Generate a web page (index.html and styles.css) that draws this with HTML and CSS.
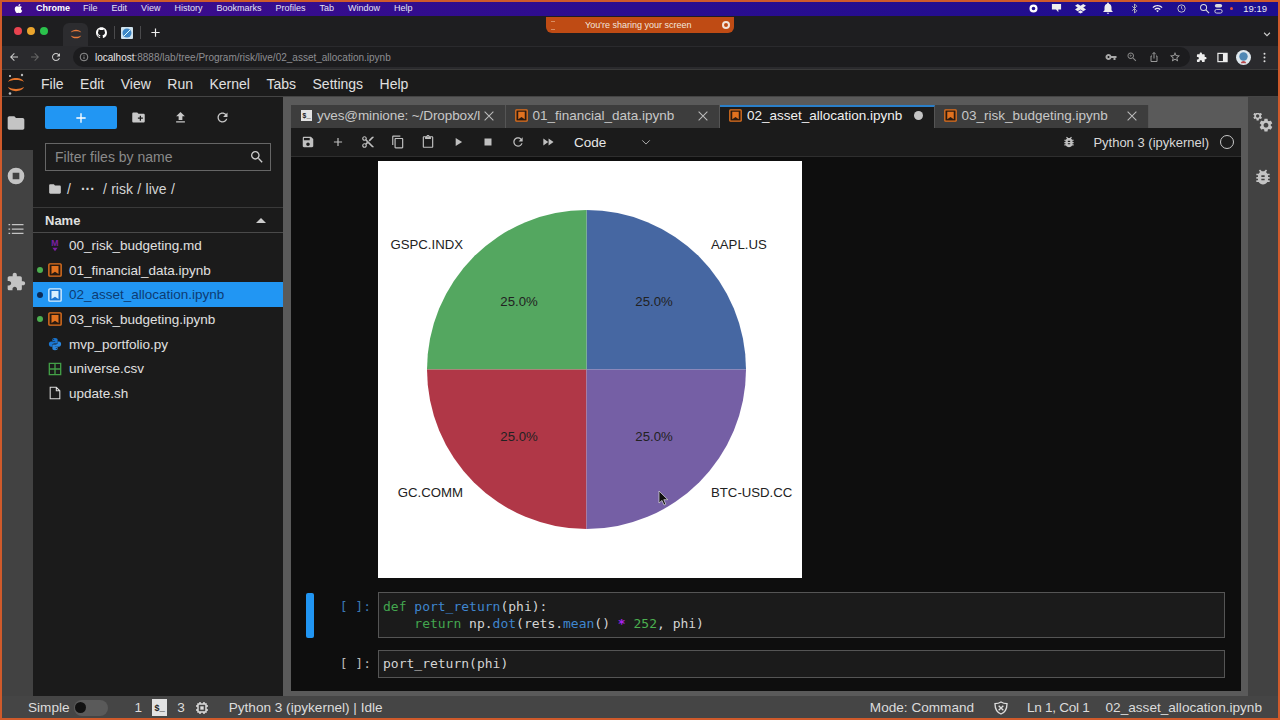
FILE: index.html
```html
<!DOCTYPE html>
<html lang="en">
 <head>
  <meta charset="UTF-8" />
  <meta name="viewport" content="width=device-width, initial-scale=1.0" />
  <title>02_asset_allocation.ipynb - JupyterLab</title>
  <link rel="stylesheet" href="styles.css">
 </head>
 <body>
  <!-- shared icons -->
  <svg class="defs" width="0" height="0">
   <symbol id="i-nb" viewBox="0 0 16 16"><rect x="1" y="1" width="14" height="14" rx="1" fill="#2a1a10" stroke="#e2721f" stroke-width="1.6"/><path d="M4 3.5h8v9l-4-2.6-4 2.6z" fill="#e2721f"/></symbol>
   <symbol id="i-nb-sel" viewBox="0 0 16 16"><rect x="1" y="1" width="14" height="14" rx="1" fill="#1976d2" stroke="#d8f0ff" stroke-width="1.6"/><path d="M4 3.5h8v9l-4-2.6-4 2.6z" fill="#d8f0ff"/></symbol>
   <symbol id="i-close" viewBox="0 0 16 16"><path d="M3 3l10 10M13 3L3 13" stroke="currentColor" stroke-width="1.2" fill="none"/></symbol>
   <symbol id="i-folder" viewBox="0 0 24 24"><path fill="currentColor" d="M10 4H4c-1.1 0-2 .9-2 2v12c0 1.1.9 2 2 2h16c1.1 0 2-.9 2-2V8c0-1.1-.9-2-2-2h-8l-2-2z"/></symbol>
   <symbol id="i-refresh" viewBox="0 0 24 24"><path fill="currentColor" d="M17.65 6.35C16.2 4.9 14.21 4 12 4c-4.42 0-7.99 3.58-7.99 8s3.57 8 7.99 8c3.73 0 6.84-2.55 7.73-6h-2.08c-.82 2.33-3.04 4-5.65 4-3.31 0-6-2.69-6-6s2.69-6 6-6c1.66 0 3.14.69 4.22 1.78L13 11h7V4l-2.35 2.35z"/></symbol>
   <symbol id="i-bug" viewBox="0 0 24 24"><path fill="currentColor" d="M20 8h-2.81c-.45-.78-1.07-1.45-1.82-1.96L17 4.41 15.59 3l-2.17 2.17C12.96 5.06 12.49 5 12 5c-.49 0-.96.06-1.41.17L8.41 3 7 4.41l1.62 1.63C7.88 6.55 7.26 7.22 6.81 8H4v2h2.09c-.05.33-.09.66-.09 1v1H4v2h2v1c0 .34.04.67.09 1H4v2h2.81c1.04 1.79 2.97 3 5.19 3s4.15-1.21 5.19-3H20v-2h-2.09c.05-.33.09-.66.09-1v-1h2v-2h-2v-1c0-.34-.04-.67-.09-1H20V8zm-6 8h-4v-2h4v2zm0-4h-4v-2h4v2z"/></symbol>
   <symbol id="i-puzzle" viewBox="0 0 24 24"><path fill="currentColor" d="M20.5 11H19V7c0-1.1-.9-2-2-2h-4V3.5C13 2.12 11.88 1 10.5 1S8 2.12 8 3.5V5H4c-1.1 0-1.99.9-1.99 2v3.8H3.5c1.49 0 2.7 1.21 2.7 2.7s-1.21 2.7-2.7 2.7H2V20c0 1.1.9 2 2 2h3.8v-1.5c0-1.49 1.21-2.7 2.7-2.7 1.49 0 2.7 1.21 2.7 2.7V22H17c1.1 0 2-.9 2-2v-4h1.5c1.38 0 2.5-1.12 2.5-2.5S21.88 11 20.5 11z"/></symbol>
   <symbol id="i-gear" viewBox="0 0 24 24"><path fill="currentColor" d="M19.14 12.94c.04-.3.06-.61.06-.94 0-.32-.02-.64-.07-.94l2.03-1.58c.18-.14.23-.41.12-.61l-1.92-3.32c-.12-.22-.37-.29-.59-.22l-2.39.96c-.5-.38-1.03-.7-1.62-.94l-.36-2.54c-.04-.24-.24-.41-.48-.41h-3.84c-.24 0-.43.17-.47.41l-.36 2.54c-.59.24-1.13.57-1.62.94l-2.39-.96c-.22-.08-.47 0-.59.22L2.74 8.87c-.12.21-.08.47.12.61l2.03 1.58c-.05.3-.09.63-.09.94s.02.64.07.94l-2.03 1.58c-.18.14-.23.41-.12.61l1.92 3.32c.12.22.37.29.59.22l2.39-.96c.5.38 1.03.7 1.62.94l.36 2.54c.05.24.24.41.48.41h3.84c.24 0 .44-.17.47-.41l.36-2.54c.59-.24 1.13-.56 1.62-.94l2.39.96c.22.08.47 0 .59-.22l1.92-3.32c.12-.22.07-.47-.12-.61l-2.01-1.58zM12 15.6c-1.98 0-3.6-1.62-3.6-3.6s1.62-3.6 3.6-3.6 3.6 1.62 3.6 3.6-1.62 3.6-3.6 3.6z"/></symbol>
  </svg>

  <div class="screen">
   <!-- mac menu bar -->
   <div class="macbar">
    <svg class="apple" viewBox="0 0 24 24"><path fill="currentColor" d="M18.7 19.5c-.8 1.2-1.7 2.4-3 2.5-1.3 0-1.8-.8-3.3-.8s-2 .8-3.3.8c-1.3 0-2.3-1.3-3.2-2.5C4.2 17 2.9 12.5 4.7 9.4c.9-1.5 2.4-2.5 4.1-2.5 1.3 0 2.5.9 3.3.9s2.3-1.1 3.8-.9c.7 0 2.5.3 3.6 2-.1.1-2.2 1.3-2.1 3.8 0 3 2.6 4 2.7 4-.1.1-.5 1.4-1.4 2.8zM13 3.5c.7-.8 1.9-1.5 2.9-1.5.1 1.2-.3 2.3-1 3.2-.7.8-1.8 1.5-2.9 1.4-.1-1.2.4-2.4 1-3.1z"/></svg>
    <b>Chrome</b><span>File</span><span>Edit</span><span>View</span><span>History</span><span>Bookmarks</span><span>Profiles</span><span>Tab</span><span>Window</span><span>Help</span>
    <div class="tray">
     <svg viewBox="0 0 12 12"><circle cx="6" cy="6" r="3.2" fill="none" stroke="#fff" stroke-width="2.4"/></svg>
     <svg viewBox="0 0 12 12"><path fill="#eee" d="M1 1h10v6H8v3L5.500 7H1z"/></svg>
     <svg viewBox="0 0 12 12"><path fill="#eee" d="M3 1l3 2 3-2 3 2-3 2 3 2-3 2-3-2-3 2-3-2 3-2-3-2zM3 9.800l3-1.800 3 1.800L6 11.500z"/></svg>
     <svg class="wide" viewBox="0 0 24 24"><path fill="#eee" d="M12 22c1.100 0 2-.9 2-2h-4c0 1.100.89 2 2 2zm6-6v-5c0-3.070-1.640-5.640-4.500-6.320V4c0-.83-.67-1.500-1.500-1.500s-1.500.67-1.500 1.500v.68C7.630 5.360 6 7.920 6 11v5l-2 2v1h16v-1l-2-2z"/></svg>
     <svg viewBox="0 0 12 12"><path fill="none" stroke="#bbb" d="M3.500 3.500l5 5L6 11V1l2.500 2.500-5 5"/></svg>
     <svg viewBox="0 0 24 24"><path fill="#eee" d="M1 9l2 2c4.970-4.970 13.030-4.970 18 0l2-2C16.930 2.930 7.080 2.930 1 9zm8 8l3 3 3-3c-1.650-1.660-4.340-1.660-6 0zm-4-4l2 2c2.760-2.760 7.240-2.760 10 0l2-2C15.140 9.140 8.870 9.140 5 13z"/></svg>
     <svg viewBox="0 0 12 12"><circle cx="6" cy="6" r="4" fill="none" stroke="#ccc"/><path d="M6 3.500V6l1.500 1" fill="none" stroke="#ccc" stroke-width=".8"/></svg>
     <svg viewBox="0 0 12 12"><circle cx="5" cy="5" r="3.300" fill="none" stroke="#ddd" stroke-width="1.100"/><path d="M7.500 7.500L11 11" stroke="#ddd" stroke-width="1.200"/></svg>
     <svg class="ctrl" viewBox="0 0 12 12"><rect x="2" y="1" width="8" height="4" rx="2" fill="#ddd"/><rect x="2" y="7" width="8" height="4" rx="2" fill="none" stroke="#ddd"/></svg>
     <i class="rec"></i>
     <span class="clock">19:19</span>
    </div>
   </div>

   <!-- chrome tabs -->
   <div class="tabstrip">
    <div class="lights"><i class="red"></i><i class="yellow"></i><i class="green"></i></div>
    <div class="pinned">
     <svg viewBox="0 0 20 20"><path fill="#e87a3a" d="M2.500 8C5 2.500 15 2.500 17.500 8 14 5.500 6 5.500 2.500 8zM2.500 12C5 17.500 15 17.500 17.500 12 14 14.500 6 14.500 2.500 12z"/></svg>
    </div>
    <svg class="gh" viewBox="0 0 24 24"><path fill="#fff" d="M12 .5C5.370.5 0 5.870 0 12.500c0 5.300 3.440 9.800 8.200 11.390.6.11.82-.26.82-.58v-2.030c-3.340.73-4.040-1.610-4.040-1.610-.55-1.390-1.330-1.760-1.330-1.760-1.090-.74.08-.73.08-.73 1.200.09 1.840 1.240 1.840 1.240 1.070 1.830 2.810 1.300 3.490 1 .11-.78.42-1.300.76-1.600-2.670-.3-5.470-1.330-5.470-5.930 0-1.310.47-2.380 1.240-3.220-.14-.3-.54-1.520.1-3.180 0 0 1.010-.32 3.300 1.230a11.500 11.500 0 0 1 6 0c2.280-1.550 3.290-1.230 3.290-1.230.64 1.660.24 2.880.12 3.180a4.650 4.650 0 0 1 1.230 3.220c0 4.610-2.800 5.630-5.480 5.920.42.36.81 1.100.81 2.220v3.290c0 .32.22.7.83.58A12 12 0 0 0 24 12.500C24 5.870 18.630.5 12 .5z"/></svg>
    <i class="tab-sep"></i>
    <svg class="fav" viewBox="0 0 12 12"><rect width="12" height="12" rx="1" fill="#cfe2ee"/><circle cx="6" cy="6" r="4.500" fill="#3d86c6"/><path d="M3 9l6-6" stroke="#dff" stroke-width="1"/></svg>
    <i class="tab-sep"></i>
    <svg class="newtab" viewBox="0 0 12 12"><path d="M6 1.500v9M1.500 6h9" stroke="#eee" stroke-width="1.300"/></svg>
    <svg class="tabs-menu" viewBox="0 0 12 12"><path d="M2.500 4.500L6 8l3.500-3.500" fill="none" stroke="#ccc" stroke-width="1.300"/></svg>
   </div>

   <!-- screen sharing pill -->
   <div class="share">
    <span class="grip"></span>
    <span class="share-text">You're sharing your screen</span>
    <span class="share-stop"></span>
   </div>

   <!-- chrome address bar -->
   <div class="urlbar">
    <svg class="nav" viewBox="0 0 24 24"><path fill="#ccc" d="M20 11H7.830l5.590-5.590L12 4l-8 8 8 8 1.410-1.410L7.830 13H20z"/></svg>
    <svg class="nav" viewBox="0 0 24 24"><path fill="#666" d="M12 4l-1.410 1.410L16.170 11H4v2h12.170l-5.580 5.590L12 20l8-8z"/></svg>
    <svg class="nav reload" viewBox="0 0 24 24"><use href="#i-refresh"/></svg>
    <div class="omnibox">
     <svg class="info" viewBox="0 0 12 12"><circle cx="6" cy="6" r="4.600" fill="none" stroke="#aaa"/><path d="M6 5.500v3M6 3.400v1" stroke="#aaa"/></svg>
     <span class="url"><b>localhost</b>:8888/lab/tree/Program/risk/live/02_asset_allocation.ipynb</span>
     <div class="omni-icons">
      <svg viewBox="0 0 24 24"><path fill="#aaa" d="M12.650 10C11.830 7.670 9.610 6 7 6c-3.310 0-6 2.690-6 6s2.690 6 6 6c2.610 0 4.830-1.670 5.650-4H17v4h4v-4h2v-4H12.650zM7 14c-1.100 0-2-.9-2-2s.9-2 2-2 2 .9 2 2-.9 2-2 2z"/></svg>
      <svg viewBox="0 0 24 24"><path fill="#888" d="M15.500 14h-.79l-.28-.27C15.410 12.590 16 11.110 16 9.500 16 5.910 13.090 3 9.500 3S3 5.910 3 9.500 5.910 16 9.500 16c1.610 0 3.090-.59 4.230-1.570l.27.28v.79l5 4.990L20.490 19l-4.990-5zm-6 0C7.010 14 5 11.990 5 9.500S7.010 5 9.500 5 14 7.010 14 9.500 11.990 14 9.500 14zM9 7h1v2h2v1h-2v2H9v-2H7V9h2z"/></svg>
      <svg viewBox="0 0 24 24"><path fill="none" stroke="#999" stroke-width="2" d="M8 10H6v11h12V10h-2M12 15V3M8.500 6.500L12 3l3.500 3.500"/></svg>
      <svg viewBox="0 0 24 24"><path fill="#aaa" d="M22 9.240l-7.190-.62L12 2 9.190 8.630 2 9.240l5.460 4.730L5.820 21 12 17.270 18.180 21l-1.630-7.030L22 9.240zM12 15.400l-3.760 2.270 1-4.280-3.320-2.880 4.380-.38L12 6.100l1.710 4.040 4.380.38-3.320 2.880 1 4.280L12 15.400z"/></svg>
     </div>
    </div>
    <div class="chrome-actions">
     <svg viewBox="0 0 24 24"><use href="#i-puzzle"/></svg>
     <svg viewBox="0 0 12 12"><rect x="1" y="1.500" width="10" height="9" fill="none" stroke="#eee" stroke-width="1.300"/><rect x="6.500" y="1.500" width="4.500" height="9" fill="#eee"/></svg>
     <svg class="avatar" viewBox="0 0 16 16"><circle cx="8" cy="8" r="8" fill="#dfe8ee"/><circle cx="8" cy="7" r="4.500" fill="#4f88b5"/><path d="M5 14c1-3 5-3 6 0z" fill="#b7484b"/></svg>
     <svg viewBox="0 0 12 12"><circle cx="6" cy="2" r="1.100" fill="#ddd"/><circle cx="6" cy="6" r="1.100" fill="#ddd"/><circle cx="6" cy="10" r="1.100" fill="#ddd"/></svg>
    </div>
   </div>

   <!-- jupyter menu -->
   <div class="menubar">
    <svg class="logo" viewBox="0 0 16 24">
     <path fill="#e8762c" d="M0 10C2 4.500 14 4.500 16 10 12 7.400 4 7.400 0 10zM0 15C2 20.500 14 20.500 16 15 12 17.600 4 17.600 0 15z"/>
     <circle cx="14" cy="3" r="1.200" fill="#bbb"/><circle cx="2" cy="4" r="1" fill="#ddd"/><circle cx="2" cy="21.500" r="1.300" fill="#bbb"/>
    </svg>
    <span>File</span><span>Edit</span><span>View</span><span>Run</span><span>Kernel</span><span>Tabs</span><span>Settings</span><span>Help</span>
   </div>

   <div class="lab">
    <!-- left activity bar -->
    <div class="activity">
     <div class="act-item active"><svg viewBox="0 0 24 24"><use href="#i-folder"/></svg></div>
     <div class="act-item"><svg viewBox="0 0 24 24"><path fill="currentColor" d="M12 2a10 10 0 1 0 0 20 10 10 0 0 0 0-20zm4 14H8V8h8z"/></svg></div>
     <div class="act-item"><svg viewBox="0 0 24 24"><path fill="currentColor" d="M3 6h2v1.500H3zM7 6h14v1.500H7zM3 11.250h2v1.500H3zM7 11.250h14v1.500H7zM3 16.500h2V18H3zM7 16.500h14V18H7z"/></svg></div>
     <div class="act-item"><svg viewBox="0 0 24 24"><use href="#i-puzzle"/></svg></div>
    </div>

    <!-- file browser -->
    <div class="sidebar">
     <div class="fb-tools">
      <div class="launcher"><svg viewBox="0 0 24 24"><path fill="#fff" d="M19 13h-6v6h-2v-6H5v-2h6V5h2v6h6v2z"/></svg></div>
      <svg class="fb-ico" viewBox="0 0 24 24"><path fill="currentColor" d="M20 6h-8l-2-2H4c-1.110 0-1.990.89-1.990 2L2 18c0 1.110.89 2 2 2h16c1.110 0 2-.89 2-2V8c0-1.110-.89-2-2-2zm-1 8h-3v3h-2v-3h-3v-2h3V9h2v3h3v2z"/></svg>
      <svg class="fb-ico" viewBox="0 0 24 24"><path fill="currentColor" d="M9 16h6v-6h4l-7-7-7 7h4zm-4 2h14v2H5z"/></svg>
      <svg class="fb-ico" viewBox="0 0 24 24"><use href="#i-refresh"/></svg>
     </div>
     <div class="filter">
      <span>Filter files by name</span>
      <svg viewBox="0 0 24 24"><path fill="#ccc" d="M15.500 14h-.79l-.28-.27C15.410 12.590 16 11.110 16 9.500 16 5.910 13.090 3 9.500 3S3 5.910 3 9.500 5.910 16 9.500 16c1.610 0 3.090-.59 4.230-1.570l.27.28v.79l5 4.990L20.490 19l-4.990-5zm-6 0C7.010 14 5 11.990 5 9.500S7.010 5 9.500 5 14 7.010 14 9.500 11.990 14 9.500 14z"/></svg>
     </div>
     <div class="crumbs">
      <svg viewBox="0 0 24 24"><use href="#i-folder"/></svg>
      <span>/</span><span class="dots">···</span><span>/ risk / live /</span>
     </div>
     <div class="fb-head"><span>Name</span><i class="sort"></i></div>
     <div class="row">
      <i class="dot off"></i>
      <svg class="ficon" viewBox="0 0 16 16"><text x="8" y="9.500" text-anchor="middle" class="md-m">M</text><path d="M5 11h6l-3 4z" fill="#7b1fa2"/></svg>
      <span>00_risk_budgeting.md</span>
     </div>
     <div class="row"><i class="dot"></i><svg class="ficon"><use href="#i-nb"/></svg><span>01_financial_data.ipynb</span></div>
     <div class="row selected"><i class="dot"></i><svg class="ficon"><use href="#i-nb-sel"/></svg><span>02_asset_allocation.ipynb</span></div>
     <div class="row"><i class="dot"></i><svg class="ficon"><use href="#i-nb"/></svg><span>03_risk_budgeting.ipynb</span></div>
     <div class="row">
      <i class="dot off"></i>
      <svg class="ficon" viewBox="0 0 16 16"><path fill="#1976d2" d="M8 1C5.500 1 5 2 5 3v1.500h3.200V5H3.500C2 5 1 6.200 1 8s1 3 2.500 3H5V9.500C5 8.300 6 7.500 7 7.500h2.500c1 0 1.500-.7 1.500-1.500V3c0-1-1-2-3-2zM6.500 2.300a.6.6 0 1 1 0 1.200.6.6 0 0 1 0-1.200z"/><path fill="#2a86dd" d="M8 15c2.500 0 3-1 3-2v-1.500H7.800V11h4.700c1.500 0 2.500-1.200 2.500-3s-1-3-2.500-3H11v1.500c0 1.200-1 2-2 2H6.500C5.500 8.500 5 9.200 5 10v3c0 1 1 2 3 2zm1.500-1.300a.6.6 0 1 1 0-1.200.6.6 0 0 1 0 1.200z"/></svg>
      <span>mvp_portfolio.py</span>
     </div>
     <div class="row">
      <i class="dot off"></i>
      <svg class="ficon" viewBox="0 0 16 16"><path fill="none" stroke="#43a047" stroke-width="1.500" d="M1.500 1.500h13v13h-13zM8 1.500v13M1.500 8h13"/></svg>
      <span>universe.csv</span>
     </div>
     <div class="row">
      <i class="dot off"></i>
      <svg class="ficon" viewBox="0 0 16 16"><path fill="none" stroke="#ddd" stroke-width="1.200" d="M2.500 1.500h7l4 4v9h-11zM9.500 1.500v4h4"/></svg>
      <span>update.sh</span>
     </div>
    </div>

    <!-- notebook area -->
    <div class="work">
     <div class="doc-tabs">
      <div class="doc-tab first"><span class="term">$_</span><span class="doc-name">yves@minione: ~/Dropbox/l</span><svg class="x"><use href="#i-close"/></svg></div>
      <div class="doc-tab"><svg class="nb"><use href="#i-nb"/></svg><span class="doc-name">01_financial_data.ipynb</span><svg class="x"><use href="#i-close"/></svg></div>
      <div class="doc-tab current"><svg class="nb"><use href="#i-nb"/></svg><span class="doc-name">02_asset_allocation.ipynb</span><i class="dirty"></i></div>
      <div class="doc-tab"><svg class="nb"><use href="#i-nb"/></svg><span class="doc-name">03_risk_budgeting.ipynb</span><svg class="x"><use href="#i-close"/></svg></div>
     </div>
     <div class="toolbar">
      <svg class="tb" viewBox="0 0 24 24"><path fill="currentColor" d="M17 3H5c-1.110 0-2 .9-2 2v14c0 1.100.89 2 2 2h14c1.100 0 2-.9 2-2V7l-4-4zm-5 16c-1.660 0-3-1.340-3-3s1.340-3 3-3 3 1.340 3 3-1.340 3-3 3zm3-10H5V5h10v4z"/></svg>
      <svg class="tb" viewBox="0 0 24 24"><path fill="currentColor" d="M19 13h-6v6h-2v-6H5v-2h6V5h2v6h6v2z"/></svg>
      <svg class="tb" viewBox="0 0 24 24"><path fill="currentColor" d="M9.640 7.640c.23-.5.36-1.050.36-1.640 0-2.210-1.790-4-4-4S2 3.790 2 6s1.790 4 4 4c.59 0 1.140-.13 1.640-.36L10 12l-2.360 2.360C7.140 14.130 6.590 14 6 14c-2.210 0-4 1.790-4 4s1.790 4 4 4 4-1.790 4-4c0-.59-.13-1.140-.36-1.640L12 14l7 7h3v-1L9.640 7.640zM6 8c-1.100 0-2-.89-2-2s.9-2 2-2 2 .89 2 2-.9 2-2 2zm0 12c-1.100 0-2-.89-2-2s.9-2 2-2 2 .89 2 2-.9 2-2 2zm6-7.500c-.28 0-.5-.22-.5-.5s.22-.5.5-.5.5.22.5.5-.22.5-.5.5zM19 3l-6 6 2 2 7-7V3z"/></svg>
      <svg class="tb" viewBox="0 0 24 24"><path fill="currentColor" d="M16 1H4c-1.100 0-2 .9-2 2v14h2V3h12V1zm3 4H8c-1.100 0-2 .9-2 2v14c0 1.100.9 2 2 2h11c1.100 0 2-.9 2-2V7c0-1.100-.9-2-2-2zm0 16H8V7h11v14z"/></svg>
      <svg class="tb" viewBox="0 0 24 24"><path fill="currentColor" d="M19 2h-4.180C14.400.84 13.300 0 12 0c-1.300 0-2.400.84-2.820 2H5c-1.100 0-2 .9-2 2v16c0 1.100.9 2 2 2h14c1.100 0 2-.9 2-2V4c0-1.100-.9-2-2-2zm-7 0c.55 0 1 .45 1 1s-.45 1-1 1-1-.45-1-1 .45-1 1-1zm7 18H5V4h2v3h10V4h2v16z"/></svg>
      <svg class="tb" viewBox="0 0 24 24"><path fill="currentColor" d="M8 5v14l11-7z"/></svg>
      <svg class="tb" viewBox="0 0 24 24"><path fill="currentColor" d="M6 6h12v12H6z"/></svg>
      <svg class="tb" viewBox="0 0 24 24"><use href="#i-refresh"/></svg>
      <svg class="tb" viewBox="0 0 24 24"><path fill="currentColor" d="M4 18l8.500-6L4 6v12zm9-12v12l8.500-6L13 6z"/></svg>
      <span class="celltype">Code</span>
      <svg class="chev" viewBox="0 0 12 12"><path d="M1.500 4L6 8.500 10.500 4" fill="none" stroke="#bbb" stroke-width="1.100"/></svg>
      <svg class="tb kbug" viewBox="0 0 24 24"><use href="#i-bug"/></svg>
      <span class="kernel">Python 3 (ipykernel)</span>
      <i class="kstate"></i>
     </div>

     <div class="notebook">
      <!-- matplotlib output -->
      <svg class="pie" viewBox="0 0 424 417" width="424" height="417">
       <rect width="424" height="417" fill="#fff"/>
       <path d="M208.500 208.500V49A159.500 159.500 0 0 1 368 208.500z" fill="#4667a2"/>
       <path d="M208.500 208.500H49A159.500 159.500 0 0 1 208.500 49z" fill="#54a760"/>
       <path d="M208.500 208.500V368A159.500 159.500 0 0 1 49 208.500z" fill="#b03747"/>
       <path d="M208.500 208.500H368A159.500 159.500 0 0 1 208.500 368z" fill="#755fa5"/>
       <g class="pie-label">
        <text x="85" y="88" text-anchor="end">GSPC.INDX</text>
        <text x="333" y="88">AAPL.US</text>
        <text x="85" y="336" text-anchor="end">GC.COMM</text>
        <text x="333" y="336">BTC-USD.CC</text>
        <text x="141" y="145" text-anchor="middle">25.0%</text>
        <text x="276" y="145" text-anchor="middle">25.0%</text>
        <text x="141" y="280" text-anchor="middle">25.0%</text>
        <text x="276" y="280" text-anchor="middle">25.0%</text>
       </g>
       <path d="M281 330v12l3-2.600 2 4.600 1.800-.8-2-4.500h4z" fill="#111" stroke="#ddd" stroke-width=".7"/>
      </svg>

      <div class="cell first">
       <i class="cell-bar"></i>
       <div class="prompt blue">[ ]:</div>
       <div class="input"><span class="kw">def</span> <span class="fn">port_return</span>(phi):
    <span class="kw">return</span> np.<span class="fn">dot</span>(rets.<span class="fn">mean</span>() <span class="op">*</span> <span class="num">252</span>, phi)</div>
      </div>
      <div class="cell">
       <i class="cell-bar none"></i>
       <div class="prompt">[ ]:</div>
       <div class="input">port_return(phi)</div>
      </div>
     </div>
    </div>

    <!-- right activity bar -->
    <div class="rightbar">
     <div class="act-item">
      <svg viewBox="0 0 24 24"><g transform="translate(-1 -3) scale(.55)"><use href="#i-gear"/></g><g transform="translate(6 5) scale(.8)"><use href="#i-gear"/></g></svg>
     </div>
     <div class="act-item"><svg viewBox="0 0 24 24"><use href="#i-bug"/></svg></div>
    </div>
   </div>

   <!-- status bar -->
   <div class="status">
    <span class="simple">Simple</span>
    <span class="toggle"><i></i></span>
    <span class="count">1</span>
    <span class="term big">$_</span>
    <span class="count three">3</span>
    <svg class="chip" viewBox="0 0 24 24"><path fill="none" stroke="#ddd" stroke-width="2.200" d="M6 6h12v12H6zM3 9h3M3 15h3M18 9h3M18 15h3M9 3v3M15 3v3M9 18v3M15 18v3"/><rect x="9.500" y="9.500" width="5" height="5" fill="#ddd"/></svg>
    <span class="kstatus">Python 3 (ipykernel) | Idle</span>
    <span class="mode">Mode: Command</span>
    <svg class="shield" viewBox="0 0 24 24"><path fill="none" stroke="#ddd" stroke-width="2" d="M12 3c3 2 6 2.500 9 2.500 0 8-3 13-9 15.500C6 18.500 3 13.500 3 5.500 6 5.500 9 5 12 3z"/><path d="M8.500 8.500l7 7M15.500 8.500l-7 7" stroke="#ddd" stroke-width="2"/></svg>
    <span class="pos">Ln 1, Col 1</span>
    <span class="fname">02_asset_allocation.ipynb</span>
   </div>
  </div>
 </body>
</html>
```

FILE: styles.css
```css
* {
 margin: 0;
 padding: 0;
 box-sizing: border-box;
}
i {
 display: block;
}
svg {
 display: block;
 flex: none;
}
body {
 width: 1280px;
 height: 720px;
 overflow: hidden;
 font-family: "Liberation Sans", Arial, sans-serif;
 background-color: #cf5a2b;
}
.defs {
 position: absolute;
}
.screen {
 position: relative;
 width: 1280px;
 height: 720px;
 padding: 2px;
 display: flex;
 flex-direction: column;
}

/* mac menu bar */
.macbar {
 height: 14px;
 padding-left: 11px;
 padding-bottom: 2px;
 display: flex;
 align-items: center;
 gap: 14px;
 color: #e4e0f2;
 font-size: 9px;
 background: linear-gradient(90deg, #3f0c8a, #2b0d90 50%, #1c0e8e);
}
.macbar b {
 color: #fff;
 font-size: 9px;
 margin-left: -2px;
 margin-right: -1px;
}
.apple {
 width: 11px;
 height: 11px;
 color: #fff;
}
.tray {
 margin-left: auto;
 padding-right: 11px;
 display: flex;
 align-items: center;
 gap: 12.5px;
}
.tray svg {
 width: 11px;
 height: 11px;
}
.tray svg.wide {
 width: 14px;
 height: 14px;
 margin-left: 3px;
 margin-right: 1px;
}
.tray svg.ctrl {
 margin-left: -9.5px;
 margin-right: -7px;
}
.rec {
 width: 3px;
 height: 3px;
 border-radius: 50%;
 background-color: #e0523c;
}
.clock {
 margin-left: -2px;
 font-size: 9.5px;
 color: #e8e8f0;
}

/* chrome */
.tabstrip {
 height: 30px;
 display: flex;
 align-items: center;
 background-color: #1e1e20;
 color: #ddd;
}
.lights {
 display: flex;
 gap: 5px;
 margin-left: 12px;
}
.lights i {
 width: 8px;
 height: 8px;
 border-radius: 50%;
}
.red { background-color: #e8434f; }
.yellow { background-color: #eba52d; }
.green { background-color: #2bc24c; }
.pinned {
 width: 25px;
 height: 23px;
 margin-left: 15px;
 margin-top: 7px;
 padding-top: 4px;
 display: flex;
 justify-content: center;
 background-color: #2c2c2f;
 border-radius: 6px 6px 0 0;
}
.pinned svg {
 width: 14px;
 height: 14px;
}
.gh {
 width: 11px;
 height: 11px;
 margin-left: 7.5px;
 margin-top: 3px;
}
.tab-sep {
 width: 1px;
 height: 13px;
 margin: 3px 0 0 7px;
 background-color: #4a4a4c;
}
.fav {
 width: 12px;
 height: 12px;
 margin-left: 6px;
 margin-top: 3px;
}
.newtab {
 width: 11px;
 height: 11px;
 margin-left: 9px;
 margin-top: 3px;
}
.tabs-menu {
 width: 10px;
 height: 10px;
 margin-left: auto;
 margin-right: 6px;
 margin-top: 6px;
}
.share {
 position: absolute;
 top: 17px;
 left: 546px;
 width: 188px;
 height: 16px;
 display: flex;
 align-items: center;
 background-color: #bf4b14;
 border-radius: 0 0 6px 6px;
 color: #f3e6dc;
 font-size: 9px;
}
.grip {
 width: 4px;
 height: 9px;
 margin-left: 5px;
 border-top: 1px solid #d98d63;
 border-bottom: 1px solid #d98d63;
}
.share-text {
 margin-left: 30px;
 width: 133px;
 white-space: nowrap;
}
.share-stop {
 width: 8px;
 height: 8px;
 margin-left: 4px;
 border-radius: 50%;
 border: 2px solid #f2e4da;
}
.urlbar {
 height: 23px;
 padding-bottom: 1px;
 display: flex;
 align-items: center;
 background-color: #2a2a2d;
}
.nav {
 width: 12px;
 height: 12px;
 margin-left: 9px;
 margin-right: 0;
}
.nav:first-child {
 margin-left: 6px;
}
.reload {
 color: #ccc;
}
.omnibox {
 width: 1117px;
 height: 20px;
 margin-left: 11px;
 padding-left: 6px;
 display: flex;
 align-items: center;
 border-radius: 10px;
 background-color: #1c1c1e;
}
.info {
 width: 10px;
 height: 10px;
}
.url {
 margin-left: 6px;
 color: #8e8e92;
 font-size: 10px;
}
.url b {
 color: #e8e8e8;
 font-weight: normal;
}
.omni-icons {
 margin-left: auto;
 margin-right: 9px;
 display: flex;
 gap: 9.5px;
}
.omni-icons svg {
 width: 12px;
 height: 12px;
}
.chrome-actions {
 margin-left: 6px;
 display: flex;
 align-items: center;
 gap: 10px;
 color: #eee;
}
.chrome-actions svg {
 width: 11px;
 height: 11px;
}
.chrome-actions svg.avatar {
 width: 15px;
 height: 15px;
 margin-left: -2px;
 margin-right: -2px;
}

/* jupyter */
.menubar {
 height: 28px;
 padding-top: 1px;
 display: flex;
 align-items: center;
 gap: 16.5px;
 padding-left: 6px;
 color: #e0e0e0;
 font-size: 14px;
 background-color: #1b1b1b;
 border-top: 1px solid #3a3a3a;
 border-bottom: 1px solid #444;
}
.logo {
 width: 16px;
 height: 24px;
 margin-right: 0.5px;
}
.lab {
 height: 599px;
 display: flex;
 background-color: #5a5a5a;
}
.activity {
 width: 31px;
 background-color: #424242;
}
.act-item {
 height: 53px;
 padding-bottom: 2px;
 display: flex;
 align-items: center;
 justify-content: center;
 color: #c4c4c4;
}
.activity .act-item {
 padding-right: 3px;
}
.rightbar .act-item + .act-item {
 padding-bottom: 0;
}
.act-item svg {
 width: 20px;
 height: 20px;
}
.act-item.active {
 background-color: #1b1b1b;
}
.sidebar {
 width: 250px;
 padding-top: 9px;
 background-color: #1b1b1b;
 color: #e0e0e0;
 font-size: 13.5px;
}
.fb-tools {
 height: 23px;
 padding-left: 12px;
 display: flex;
 align-items: center;
 color: #c8c8c8;
}
.launcher {
 width: 72px;
 height: 23px;
 display: flex;
 align-items: center;
 justify-content: center;
 border-radius: 2px;
 background-color: #2196f3;
}
.launcher svg {
 width: 16px;
 height: 16px;
}
.fb-ico {
 width: 15px;
 height: 15px;
 margin-left: 27px;
}
.launcher + .fb-ico {
 margin-left: 14px;
}
.filter {
 width: 226px;
 height: 28px;
 margin: 14px 0 0 12px;
 padding: 0 5px 0 9px;
 display: flex;
 align-items: center;
 justify-content: space-between;
 border: 1px solid #666;
 color: #8a8a8a;
 font-size: 14px;
}
.filter svg {
 width: 16px;
 height: 16px;
}
.crumbs {
 height: 36px;
 padding-left: 15px;
 display: flex;
 align-items: center;
 gap: 5px;
 color: #d4d4d4;
 font-size: 14px;
 word-spacing: 0.5px;
}
.crumbs svg {
 width: 14px;
 height: 14px;
 color: #c8c8c8;
}
.crumbs .dots {
 margin: 0 3px 0 5px;
 font-weight: bold;
}
.fb-head {
 height: 26px;
 padding: 0 17px 0 12px;
 display: flex;
 align-items: center;
 justify-content: space-between;
 border-top: 1px solid #3a3a3a;
 border-bottom: 1px solid #4a4a4a;
 font-weight: bold;
 font-size: 13px;
}
.sort {
 width: 0;
 height: 0;
 border-left: 5px solid transparent;
 border-right: 5px solid transparent;
 border-bottom: 5px solid #ccc;
}
.row {
 height: 24.7px;
 display: flex;
 align-items: center;
}
.row .dot {
 width: 6px;
 height: 6px;
 margin-left: 4px;
 border-radius: 50%;
 background-color: #4caf50;
}
.row .dot.off {
 background-color: transparent;
}
.ficon {
 width: 14px;
 height: 14px;
 margin: 0 7px 0 5px;
}
.md-m {
 font-size: 10px;
 font-weight: bold;
 fill: #7b1fa2;
}
.row.selected {
 background-color: #2196f3;
 color: #0d3c73;
}
.row.selected .dot {
 background-color: #0b2a55;
}

/* notebook area */
.work {
 width: 950px;
 margin-left: 8px;
 margin-right: 7px;
 margin-bottom: 5px;
 padding-top: 8px;
 display: flex;
 flex-direction: column;
}
.doc-tabs {
 height: 23px;
 display: flex;
}
.doc-tab {
 width: 214.5px;
 height: 23px;
 padding-left: 9px;
 padding-bottom: 2px;
 display: flex;
 align-items: center;
 background-color: #3d3d3d;
 border-right: 1px solid #555;
 color: #c8c8c8;
 font-size: 13.5px;
}
.doc-tab.first {
 padding-left: 10px;
}
.doc-tab.first .doc-name {
 letter-spacing: -0.1px;
}
.doc-tab.current {
 padding-bottom: 4px;
 background-color: #1b1b1b;
 color: #f0f0f0;
 border-top: 2px solid #2a7fc9;
}
.term {
 flex: none;
 width: 11px;
 height: 11px;
 background-color: #e2e2e2;
 color: #222;
 font-size: 7px;
 line-height: 12px;
 text-align: center;
 font-family: "Liberation Mono", monospace;
 font-weight: bold;
}
.nb {
 width: 13px;
 height: 13px;
}
.doc-name {
 margin-left: 5px;
 flex: 1;
 white-space: nowrap;
}
.x {
 width: 14px;
 height: 14px;
 margin-right: 9px;
 color: #bbb;
}
.dirty {
 width: 9px;
 height: 9px;
 margin-right: 11px;
 border-radius: 50%;
 background-color: #c4c4c4;
}
.toolbar {
 height: 29px;
 padding-left: 10px;
 display: flex;
 align-items: center;
 background-color: #1b1b1b;
 border-bottom: 1px solid #2e2e2e;
 color: #c0c0c0;
}
.tb {
 width: 14px;
 height: 14px;
 margin-right: 16px;
}
.celltype {
 margin-left: 3px;
 color: #e8e8e8;
 font-size: 13.5px;
}
.chev {
 width: 10px;
 height: 10px;
 margin-left: 35px;
}
.tb.kbug {
 margin-left: auto;
 margin-right: 17px;
}
.kernel {
 color: #d8d8d8;
 font-size: 13px;
 white-space: nowrap;
}
.kstate {
 width: 14px;
 height: 14px;
 margin-left: 11px;
 margin-right: 7px;
 border-radius: 50%;
 border: 1px solid #c8c8c8;
}
.notebook {
 flex: 1;
 overflow: hidden;
 padding-top: 4px;
 background-color: #0e0e0e;
}
.pie {
 margin-left: 87px;
}
.pie-label text {
 font-family: "Liberation Sans", Arial, sans-serif;
 font-size: 13.2px;
 fill: #222;
}
.cell {
 margin-top: 12px;
 display: flex;
 color: #d4d4d4;
 font-family: "DejaVu Sans Mono", monospace;
 font-size: 13px;
 line-height: 17px;
}
.cell.first {
 margin-top: 14px;
}
.cell.first .input {
 padding: 5px 4px 4px;
}
.cell-bar {
 width: 8px;
 height: 45px;
 margin-top: 1px;
 margin-left: 15px;
 border-radius: 2px;
 background-color: #2196f3;
}
.cell-bar.none {
 height: 0;
 background-color: transparent;
}
.prompt {
 width: 64px;
 padding: 5px 7px 0 0;
 text-align: right;
 color: #b8b8b8;
}
.prompt.blue {
 padding-top: 6px;
 color: #3a78b5;
}
.input {
 width: 847px;
 padding: 4px 4px 5px;
 border: 1px solid #555;
 background-color: #1b1b1b;
 white-space: pre;
}
.kw { color: #43a64f; }
.fn { color: #3f86cf; }
.op { color: #a822ee; font-weight: bold; }
.num { color: #4caf50; }
.rightbar {
 flex: 1;
 background-color: #424242;
}

/* status bar */
.status {
 height: 22px;
 padding-top: 1px;
 display: flex;
 align-items: center;
 color: #dcdcdc;
 font-size: 13.6px;
 background-color: #454545;
}
.simple {
 margin-left: 26px;
}
.toggle {
 width: 34px;
 height: 16px;
 margin-left: 4px;
 padding: 2px 0 0 1.5px;
 border-radius: 8px;
 background-color: #5a5a5a;
}
.toggle i {
 width: 11px;
 height: 11px;
 border-radius: 50%;
 background-color: #111;
}
.count {
 margin-left: 27px;
}
.term.big {
 width: 15px;
 height: 17px;
 margin-left: 10px;
 line-height: 20px;
 font-size: 9px;
}
.count.three {
 margin-left: 10px;
}
.chip {
 width: 16px;
 height: 16px;
 margin-left: 9px;
}
.kstatus {
 margin-left: 19px;
}
.mode {
 margin-left: auto;
}
.shield {
 width: 16px;
 height: 16px;
 margin-left: 19px;
}
.pos {
 margin-left: 18px;
 letter-spacing: -0.3px;
}
.fname {
 margin-left: 16px;
 margin-right: 16px;
}
```
